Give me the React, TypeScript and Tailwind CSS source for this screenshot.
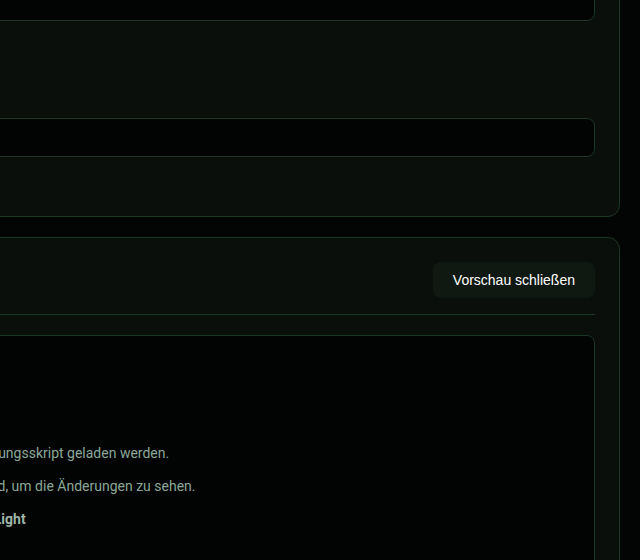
import React from 'react';

const Card: React.FC<{ children: React.ReactNode }> = ({ children }) => (
  <section className="rounded-xl border border-[#1a3824] bg-[#0a0f0c] p-6">{children}</section>
);

export default function App() {
  return (
    <div className="flex h-[560px] w-full justify-end overflow-hidden bg-[#030504] font-['Roboto',sans-serif] text-sm text-[#8aa898]">
      <div className="-mt-[204px] flex w-[987px] shrink-0 flex-col gap-5 pr-5">
        {/* Skript-Einstellungen */}
        <Card>
          <div className="h-[200px] rounded-lg border border-[#1a3824] bg-[#020303]" />
          <div className="mt-[69px] mb-2 leading-5 text-[#a5bdae]">Initialisierung</div>
          <input
            className="block h-[39px] w-full rounded-lg border border-[#1a3824] bg-[#020303] px-3 text-[#c9d8cf] outline-none"
            defaultValue=""
          />
          <p className="mt-[15px] leading-5 text-[#5f7a69]">Optional</p>
        </Card>

        {/* Vorschau */}
        <Card>
          <div className="flex items-center justify-between border-b border-[#1a3824] pb-4">
            <h2 className="text-base font-semibold text-[#c9d8cf]">Vorschau</h2>
            <button className="h-9 rounded-lg bg-[#0f1912] px-5 font-['Liberation_Sans',Arial,sans-serif] text-sm text-white">
              Vorschau schließen
            </button>
          </div>
          <div className="mt-5 h-[400px] rounded-lg border border-[#1a3824] bg-[#020303] p-6">
            <h3 className="mb-[18px] text-xl leading-8 font-bold text-[#a5bdae]">Vorschau</h3>
            <p className="mb-3 leading-[21px]">Noch kein Inhalt.</p>
            <p className="mb-3 leading-[21px]">
              Bevor die Vorschau startet, muss das Initialisierungsskript geladen werden.
            </p>
            <p className="mb-3 leading-[21px]">
              Warten Sie, bis die Vorschau erneut geladen wird, um die Änderungen zu sehen.
            </p>
            <p className="leading-[21px] font-bold text-[#9db5a6]">
              Aktuelles Farbschema der Vorschau: Dark vor Light
            </p>
          </div>
        </Card>
      </div>
    </div>
  );
}
